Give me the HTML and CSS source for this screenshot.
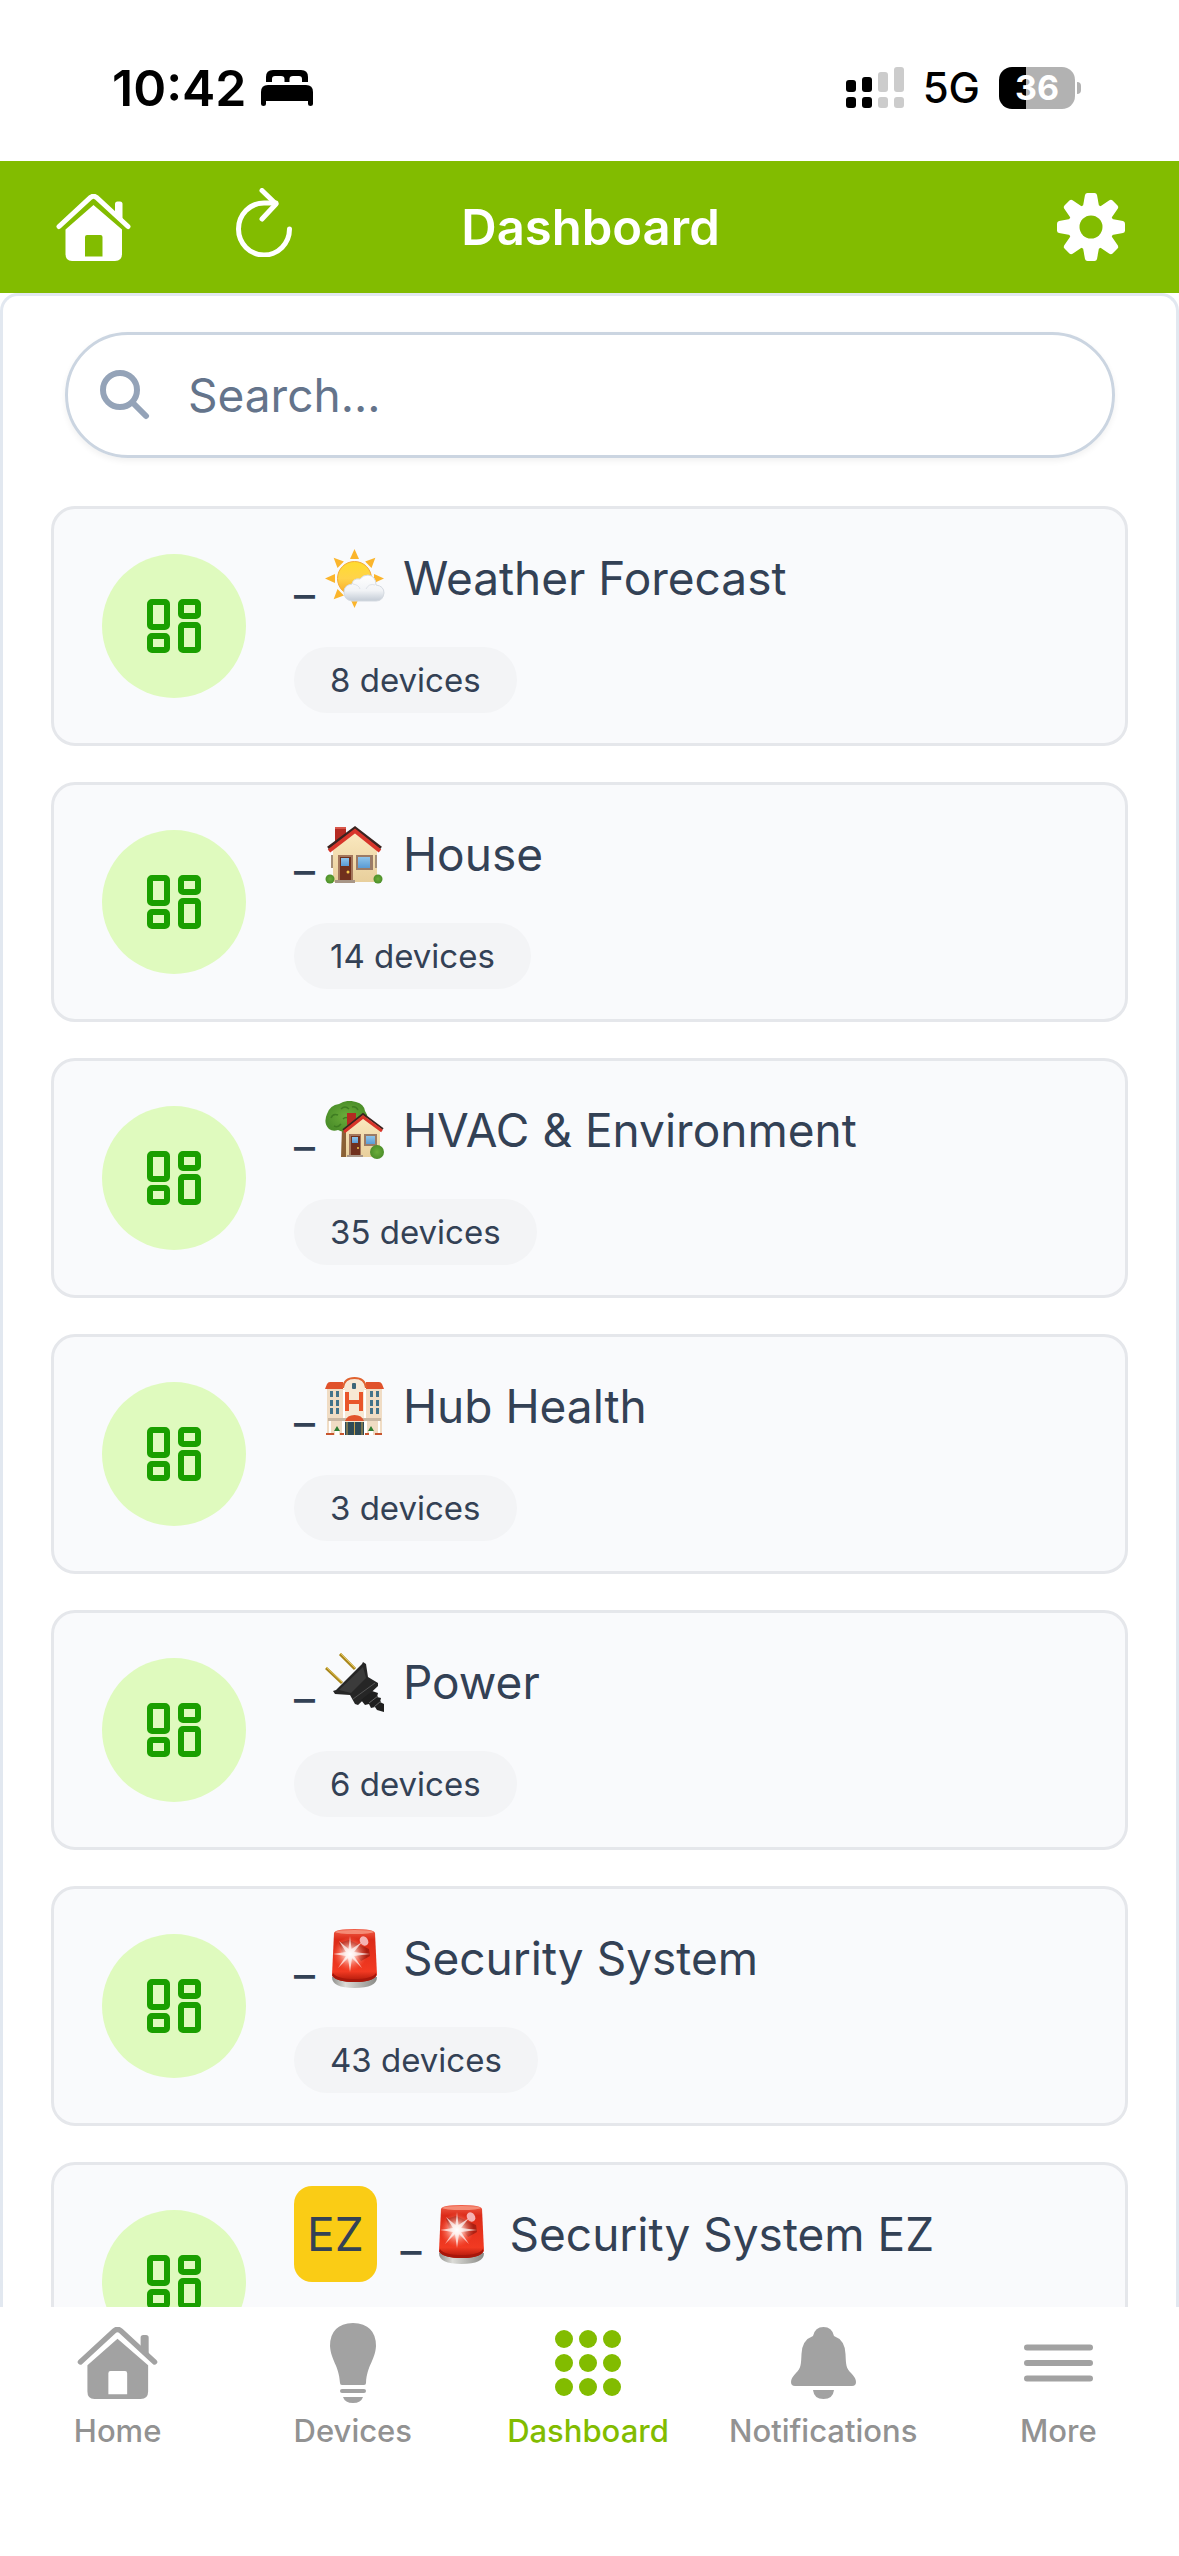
FILE: index.html
```html
<!DOCTYPE html>
<html lang="en">
<head>
  <meta charset="UTF-8">
  <meta name="viewport" content="width=device-width, initial-scale=1.0">
  <title>Dashboard</title>
  <link rel="stylesheet" href="styles.css">
</head>
<body>
  <!-- shared icons -->
  <svg class="sprite" aria-hidden="true">
    <defs>
      <linearGradient id="sun-fill" x1="0" y1="0" x2="0" y2="1">
        <stop offset="0" stop-color="#ffdc2e"/>
        <stop offset="0.5" stop-color="#ffd34a"/>
        <stop offset="1" stop-color="#f7a521"/>
      </linearGradient>
      <linearGradient id="cloud-fill" x1="0" y1="0" x2="0" y2="1">
        <stop offset="0" stop-color="#ffffff"/>
        <stop offset="0.6" stop-color="#f1f3f6"/>
        <stop offset="1" stop-color="#c3cbd5"/>
      </linearGradient>
      <linearGradient id="siren-fill" x1="0" y1="0" x2="0" y2="1">
        <stop offset="0" stop-color="#f0604a"/>
        <stop offset="0.2" stop-color="#dc2b18"/>
        <stop offset="0.8" stop-color="#f23a22"/>
        <stop offset="1" stop-color="#a81508"/>
      </linearGradient>
      <linearGradient id="siren-base" x1="0" y1="0" x2="1" y2="0">
        <stop offset="0" stop-color="#8f8f8c"/>
        <stop offset="0.3" stop-color="#dcdcd8"/>
        <stop offset="1" stop-color="#8a8a86"/>
      </linearGradient>
      <radialGradient id="siren-glow">
        <stop offset="0" stop-color="#ffffff"/>
        <stop offset="0.3" stop-color="#ffd5cc" stop-opacity="0.9"/>
        <stop offset="1" stop-color="#ff6a50" stop-opacity="0"/>
      </radialGradient>
      <linearGradient id="wall-fill" x1="0" y1="0" x2="0" y2="1">
        <stop offset="0" stop-color="#fbe9c0"/>
        <stop offset="1" stop-color="#e8cf9c"/>
      </linearGradient>
      <linearGradient id="glass-fill" x1="0" y1="0" x2="0" y2="1">
        <stop offset="0" stop-color="#8fc4ea"/>
        <stop offset="1" stop-color="#5a9bd4"/>
      </linearGradient>
      <radialGradient id="tree-fill">
        <stop offset="0" stop-color="#6bad3a"/>
        <stop offset="1" stop-color="#4c8f2a"/>
      </radialGradient>
    </defs>
    <symbol id="icon-home" viewBox="0 0 75 67">
      <path d="M3 32.500 34.500 3.500Q37.500 1 40.500 3.500L72 32.500" fill="none" stroke="currentColor" stroke-width="5" stroke-linecap="round"/>
      <path d="M59 10Q59 7.500 61.500 7.500H64Q66.500 7.500 66.500 10V27L59 20Z" fill="currentColor"/>
      <path fill-rule="evenodd" d="M37.500 11 66 35.500V60Q66 67 59 67H16Q9.500 67 9.500 60V35.500ZM31 41Q29 41 29 43V62.500H46.500V43Q46.500 41 44.500 41Z" fill="currentColor"/>
    </symbol>
    <symbol id="icon-grid" viewBox="0 0 54 54">
      <g fill="none" stroke="currentColor" stroke-width="6">
        <rect x="3" y="3" width="17" height="25" rx="2"/>
        <rect x="34" y="3" width="17" height="14" rx="2"/>
        <rect x="34" y="26" width="17" height="25" rx="2"/>
        <rect x="3" y="37" width="17" height="14" rx="2"/>
      </g>
    </symbol>
    <symbol id="emoji-siren" viewBox="0 0 60 60">
      <path d="M7 48Q7 59 29.500 59T52 48Z" fill="url(#siren-base)"/>
      <path d="M9 4Q10 0 29.500 0T50 4L52 46Q48 53 29.500 53T7 46Z" fill="url(#siren-fill)"/>
      <path d="M14 14 24 11 44 20 45 27 36 32 30 24 18 26Z" fill="#7d1009" opacity="0.55"/>
      <ellipse cx="29.500" cy="3" rx="19" ry="2" fill="#f79a84" opacity="0.8"/>
      <path d="M8 44Q12 50 29.500 50T51 44V47Q47 53 29.500 53T7 47Z" fill="#a8170b"/>
      <ellipse cx="39" cy="12" rx="4" ry="5" fill="#f5b3b3" transform="rotate(-35 39 12)"/>
      <circle cx="25" cy="25" r="17" fill="url(#siren-glow)"/>
      <path d="M25 7 26.500 20 37 13 29 23 45 25 29 27 37 39 27 29 25 43 23 29 13 39 21 27 8 25 21 23 14 12 23.500 20Z" fill="#fff" opacity="0.7"/>
    </symbol>
  </svg>

  <div class="status-bar">
    <div class="status-left">
      <span class="clock">10:42</span>
      <svg class="bed" viewBox="0 0 52 36" aria-hidden="true">
        <path d="M5 12V7Q5 0 12 0H40Q47 0 47 7V12H41V9Q41 6 38 6H32Q28.500 6 28.500 9V12H23.500V9Q23.500 6 20 6H14Q11 6 11 9V12Z"/>
        <path d="M0 22Q0 15 7 15H45Q52 15 52 22V34Q52 36 49.500 36T47 34V31H5V34Q5 36 2.500 36T0 34Z"/>
      </svg>
    </div>
    <div class="status-right">
      <svg class="signal" viewBox="0 0 58 42" aria-hidden="true">
        <g fill="#000">
          <rect x="0" y="13" width="10" height="12" rx="3"/>
          <rect x="16" y="10" width="10" height="15" rx="3"/>
          <rect x="0" y="30" width="10" height="11" rx="3"/>
          <rect x="16" y="30" width="10" height="11" rx="3"/>
        </g>
        <g fill="#ccc">
          <rect x="32" y="5" width="10" height="20" rx="3"/>
          <rect x="48" y="0" width="10" height="25" rx="3"/>
          <rect x="32" y="30" width="10" height="11" rx="3"/>
          <rect x="48" y="30" width="10" height="11" rx="3"/>
        </g>
      </svg>
      <span class="network">5G</span>
      <div class="battery">
        <span class="battery-level">36</span>
        <span class="battery-tip"></span>
      </div>
    </div>
  </div>

  <header class="app-header">
    <div class="header-actions">
      <button type="button" aria-label="Home">
        <svg class="header-home"><use href="#icon-home"/></svg>
      </button>
      <button type="button" aria-label="Refresh">
        <svg class="header-refresh" viewBox="0 0 56 69" fill="none" stroke="#fff" stroke-width="5" stroke-linecap="round" stroke-linejoin="round">
          <path d="M53.500 41A25.500 26 0 1 1 28 15H40"/>
          <path d="M26 2.500 40 16 26 31"/>
        </svg>
      </button>
    </div>
    <h1>Dashboard</h1>
    <button type="button" class="header-settings" aria-label="Settings">
      <svg viewBox="0 0 68 68">
        <g fill="#fff">
          <circle cx="34" cy="34" r="23"/>
          <path id="tooth" d="M28 2Q28.500 0 30.500 0H37.500Q39.500 0 40 2L42 13H26Z"/>
          <use href="#tooth" transform="rotate(45 34 34)"/>
          <use href="#tooth" transform="rotate(90 34 34)"/>
          <use href="#tooth" transform="rotate(135 34 34)"/>
          <use href="#tooth" transform="rotate(180 34 34)"/>
          <use href="#tooth" transform="rotate(225 34 34)"/>
          <use href="#tooth" transform="rotate(270 34 34)"/>
          <use href="#tooth" transform="rotate(315 34 34)"/>
        </g>
        <circle cx="34" cy="34" r="11.500" fill="#82bc00"/>
      </svg>
    </button>
  </header>

  <main class="panel">
    <label class="search">
      <svg viewBox="0 0 50 50" fill="none" stroke="#94a3b8" stroke-width="6" stroke-linecap="round" aria-hidden="true">
        <circle cx="20" cy="20" r="17"/>
        <path d="M33 33 46 46"/>
      </svg>
      <input type="search" placeholder="Search..." aria-label="Search dashboards">
    </label>

    <ul class="dashboards">
      <li>
        <a class="card" href="#weather">
          <span class="card-icon"><svg><use href="#icon-grid"/></svg></span>
          <span class="card-body">
            <span class="card-title">_<svg class="emoji" viewBox="0 0 60 60" role="img" aria-label="Sun behind cloud">
              <g fill="#fbb52c">
                <path id="ray" d="M29.500 0 34 10H25Z"/>
                <use href="#ray" transform="rotate(45 29.500 29.500)"/>
                <use href="#ray" transform="rotate(90 29.500 29.500)"/>
                <use href="#ray" transform="rotate(180 29.500 29.500)"/>
                <use href="#ray" transform="rotate(225 29.500 29.500)"/>
                <use href="#ray" transform="rotate(270 29.500 29.500)"/>
                <use href="#ray" transform="rotate(315 29.500 29.500)"/>
              </g>
              <circle cx="29.500" cy="29.500" r="17" fill="url(#sun-fill)" stroke="#f3a93a" stroke-width="1"/>
              <path d="M27 52Q19 51 19 43 19 36 27 35 28 29 35 30 38 26 43 26 51 27 51 36 59 37 59 44 58 52 51 52Z" fill="url(#cloud-fill)" stroke="#d5dae1" stroke-width="1"/>
              <path d="M28 35Q34 36 35 40M41 40Q44 34 50 36" fill="none" stroke="#dfe3e9" stroke-width="1"/>
            </svg> Weather Forecast</span>
            <span class="chip">8 devices</span>
          </span>
        </a>
      </li>
      <li>
        <a class="card" href="#house">
          <span class="card-icon"><svg><use href="#icon-grid"/></svg></span>
          <span class="card-body">
            <span class="card-title">_<svg class="emoji" viewBox="0 0 60 60" role="img" aria-label="House">
              <rect x="10" y="2" width="11" height="18" fill="#b52a22"/>
              <rect x="10" y="2" width="11" height="2" fill="#d8574b"/>
              <path d="M8 25 30 6 52 25V57H8Z" fill="url(#wall-fill)"/>
              <path d="M3 23 30 3 56 23" fill="none" stroke="#3a2320" stroke-width="3"/>
              <path d="M4 26 30 6 55 26" fill="none" stroke="#d8352a" stroke-width="4"/>
              <path d="M7 30V43M51 30V43" stroke="#a58f78" stroke-width="2"/>
              <rect x="13" y="30" width="15" height="26" fill="#a3765c"/>
              <rect x="15" y="32" width="11" height="24" fill="#70301d"/>
              <rect x="16" y="33" width="8" height="8" fill="url(#glass-fill)"/>
              <circle cx="23" cy="47" r="1.500" fill="#f5c84c"/>
              <rect x="31" y="30" width="17" height="15" fill="#9b7b66"/>
              <rect x="33" y="32" width="12" height="11" fill="url(#glass-fill)"/>
              <circle cx="5" cy="54" r="4.500" fill="url(#tree-fill)"/>
              <circle cx="53" cy="54" r="4.500" fill="url(#tree-fill)"/>
              <rect x="10" y="55" width="20" height="3" fill="#a89687"/>
            </svg> House</span>
            <span class="chip">14 devices</span>
          </span>
        </a>
      </li>
      <li>
        <a class="card" href="#hvac">
          <span class="card-icon"><svg><use href="#icon-grid"/></svg></span>
          <span class="card-body">
            <span class="card-title">_<svg class="emoji" viewBox="0 0 60 60" role="img" aria-label="House with garden">
              <path d="M17 26H23V56H16Z" fill="#8a6035"/>
              <path d="M4 28Q-2 22 2 13 5 4 14 3 22-2 31 1 39 3 40 10 45 17 40 24 34 30 26 28 20 33 13 29 8 31 4 28Z" fill="url(#tree-fill)"/>
              <path d="M6 17Q8 12 13 14M16 8Q20 4 24 8M27 6Q31 5 33 9M9 25Q13 27 16 23M18 18Q21 15 24 18" fill="none" stroke="#3f7d22" stroke-width="1.500"/>
              <rect x="22" y="12" width="9" height="12" fill="#b52a22"/>
              <path d="M21 30 38 16 55 30V56H21Z" fill="url(#wall-fill)"/>
              <path d="M18 29 38 13 58 28" fill="none" stroke="#3a2320" stroke-width="2"/>
              <path d="M19 31 38 16 57 30" fill="none" stroke="#d8352a" stroke-width="3"/>
              <rect x="24" y="33" width="12" height="22" fill="#a3765c"/>
              <rect x="26" y="35" width="9" height="20" fill="#70301d"/>
              <rect x="27" y="36" width="6" height="6" fill="url(#glass-fill)"/>
              <circle cx="33" cy="47" r="1" fill="#f5c84c"/>
              <rect x="39" y="33" width="13" height="12" fill="#9b7b66"/>
              <rect x="41" y="35" width="9" height="8" fill="url(#glass-fill)"/>
              <circle cx="52" cy="51" r="7" fill="url(#tree-fill)"/>
              <rect x="22" y="54" width="16" height="2" fill="#a89687"/>
            </svg> HVAC &amp; Environment</span>
            <span class="chip">35 devices</span>
          </span>
        </a>
      </li>
      <li>
        <a class="card" href="#hub">
          <span class="card-icon"><svg><use href="#icon-grid"/></svg></span>
          <span class="card-body">
            <span class="card-title">_<svg class="emoji" viewBox="0 0 60 60" role="img" aria-label="Hotel">
              <path d="M2 12H57V58H2Z" fill="#f0dcc4"/>
              <path d="M19 58V12Q20 2 29.500 2T40 12V58Z" fill="#f7e8d4"/>
              <path d="M19 13V58M40 13V58" stroke="#fff" stroke-width="2"/>
              <path d="M2 7Q3 5 5 5H18V12H0ZM41 5H54Q56 5 57 7L59 12H41Z" fill="#e0522c"/>
              <path d="M18 11Q19 1 29.500 1T41 11" fill="none" stroke="#e0622f" stroke-width="2"/>
              <rect x="27" y="6" width="4" height="6" rx="1" fill="#3d6679"/>
              <path d="M22 15V34M36 15V34M22 25H36" stroke="#e9562b" stroke-width="4"/>
              <g fill="#42728a">
                <rect x="5" y="14" width="3" height="6"/><rect x="11" y="14" width="3" height="6"/>
                <rect x="5" y="23" width="3" height="6"/><rect x="11" y="23" width="3" height="6"/>
                <rect x="5" y="31" width="3" height="6"/><rect x="11" y="31" width="3" height="6"/>
                <rect x="45" y="14" width="3" height="6"/><rect x="51" y="14" width="3" height="6"/>
                <rect x="45" y="23" width="3" height="6"/><rect x="51" y="23" width="3" height="6"/>
                <rect x="45" y="31" width="3" height="6"/><rect x="51" y="31" width="3" height="6"/>
              </g>
              <rect x="3" y="41" width="53" height="3" fill="#c9b7a3"/>
              <path d="M5 44V57M18 44V57M41 44V57M54 44V57" stroke="#fff" stroke-width="2"/>
              <path d="M20 44Q22 38 29.500 38T39 44Z" fill="#e2532c"/>
              <rect x="20" y="45" width="19" height="13" fill="#2f4a56"/>
              <path d="M22 45V58M29.500 45V58M37 45V58" stroke="#c8a24d" stroke-width="1"/>
              <path d="M12 49 15 54H9ZM46 49 49 54H43Z" fill="#2e7d32"/>
              <path d="M10 54H14V58H10ZM44 54H48V58H44Z" fill="#fff"/>
              <path d="M1 57H9M15 57H19M40 57H44M50 57H57" stroke="#c8552f" stroke-width="2"/>
            </svg> Hub Health</span>
            <span class="chip">3 devices</span>
          </span>
        </a>
      </li>
      <li>
        <a class="card" href="#power">
          <span class="card-icon"><svg><use href="#icon-grid"/></svg></span>
          <span class="card-body">
            <span class="card-title">_<svg class="emoji" viewBox="0 0 60 60" role="img" aria-label="Electric plug">
              <path d="M1 15 17 30M15 1 30 16" stroke="#a8861c" stroke-width="3"/>
              <path d="M1 14 17 29M15 0 30 15" stroke="#e4c65a" stroke-width="1"/>
              <path d="M8 38 11 37 37 11 38 9 41 11 43 24 53 30V33L33 52 30 51 25 42 10 41Z" fill="#262626"/>
              <path d="M14 37 38 14 41 25 26 40Z" fill="#3b3b3b"/>
              <path d="M28 46 50 30" stroke="#555" stroke-width="1"/>
              <path d="M36 47 47 38 53 40 52 44 56 45 55 49 59 51V59L52 57 50 54 46 55 44 51 40 52Z" fill="#1f1f1f"/>
              <path d="M44 50 53 43M49 54 56 48" stroke="#666" stroke-width="1"/>
            </svg> Power</span>
            <span class="chip">6 devices</span>
          </span>
        </a>
      </li>
      <li>
        <a class="card" href="#security">
          <span class="card-icon"><svg><use href="#icon-grid"/></svg></span>
          <span class="card-body">
            <span class="card-title">_<svg class="emoji" role="img" aria-label="Siren"><use href="#emoji-siren"/></svg> Security System</span>
            <span class="chip">43 devices</span>
          </span>
        </a>
      </li>
      <li>
        <a class="card" href="#security-ez">
          <span class="card-icon"><svg><use href="#icon-grid"/></svg></span>
          <span class="card-body">
            <span class="card-title"><span class="ez-badge">EZ</span>_<svg class="emoji" role="img" aria-label="Siren"><use href="#emoji-siren"/></svg> Security System EZ</span>
          </span>
        </a>
      </li>
    </ul>
  </main>

  <nav class="tab-bar">
    <a href="#home">
      <svg class="tab-home"><use href="#icon-home"/></svg>
      <span>Home</span>
    </a>
    <a href="#devices">
      <svg class="tab-bulb" viewBox="0 0 46 80" fill="currentColor">
        <path d="M23 0Q46 1 46 23C45 38 37 42 36 60Q36 62 34 62H12Q10 62 10 60C9 42 1 38 0 23Q0 1 23 0Z"/>
        <rect x="10" y="66" width="26" height="4" rx="2"/>
        <path d="M13 74H33Q31 80 23 80T13 74Z"/>
      </svg>
      <span>Devices</span>
    </a>
    <a href="#dashboard" class="active" aria-current="page">
      <svg class="tab-dots" viewBox="0 0 66 66" fill="currentColor">
        <circle cx="9" cy="9" r="9"/><circle cx="33" cy="9" r="9"/><circle cx="57" cy="9" r="9"/>
        <circle cx="9" cy="33" r="9"/><circle cx="33" cy="33" r="9"/><circle cx="57" cy="33" r="9"/>
        <circle cx="9" cy="57" r="9"/><circle cx="33" cy="57" r="9"/><circle cx="57" cy="57" r="9"/>
      </svg>
      <span>Dashboard</span>
    </a>
    <a href="#notifications">
      <svg class="tab-bell" viewBox="0 0 65 72" fill="currentColor">
        <path d="M22 9Q24 0 32.500 0T43 9Q54 13 54.500 27C55 38 55 41 60 46Q65 51 65 55 65 59 61 59H4Q0 59 0 55 0 51 5 46C10 41 10 38 10.500 27Q11 13 22 9Z"/>
        <path d="M22 63H43Q42 72 32.500 72T22 63Z"/>
      </svg>
      <span>Notifications</span>
    </a>
    <a href="#more">
      <svg class="tab-more" viewBox="0 0 69 38" stroke="currentColor" stroke-width="6" stroke-linecap="round">
        <path d="M3 3.500H66M3 19H66M3 34.500H66"/>
      </svg>
      <span>More</span>
    </a>
  </nav>
</body>
</html>
```
FILE: styles.css
```css
* {
  box-sizing: border-box;
}
body {
  margin: 0;
  height: 100vh;
  display: flex;
  flex-direction: column;
  background-color: #fff;
  color: #334155;
  font-family: Inter, "Liberation Sans", sans-serif;
}
button {
  display: flex;
  padding: 0;
  border: none;
  background: none;
  color: #fff;
  cursor: pointer;
}
a {
  color: inherit;
  text-decoration: none;
}
svg {
  flex: none;
}
.sprite {
  position: absolute;
  width: 0;
  height: 0;
}

/* status bar */
.status-bar {
  flex: none;
  height: 161px;
  padding: 14px 98px 0 112px;
  display: flex;
  align-items: center;
  justify-content: space-between;
  color: #000;
}
.status-left,
.status-right {
  display: flex;
  align-items: center;
}
.status-left {
  gap: 14px;
}
.status-right {
  gap: 19px;
}
.clock {
  font-size: 50px;
  font-weight: 600;
}
.bed {
  width: 52px;
  height: 36px;
}
.signal {
  width: 58px;
  height: 42px;
}
.network {
  font-size: 42px;
  font-weight: 500;
}
.battery {
  display: flex;
  align-items: center;
  gap: 2px;
}
.battery-level {
  width: 76px;
  height: 42px;
  border-radius: 13px;
  background: linear-gradient(to right, #000 36%, #b2b2b2 36%);
  color: #fff;
  font-size: 34px;
  font-weight: 700;
  line-height: 42px;
  text-align: center;
}
.battery-tip {
  width: 4px;
  height: 12px;
  border-radius: 0 4px 4px 0;
  background-color: #b2b2b2;
}

/* header */
.app-header {
  flex: none;
  height: 132px;
  padding: 0 54px 0 56px;
  display: grid;
  grid-template-columns: 1fr auto 1fr;
  align-items: center;
  background-color: #82bc00;
  color: #fff;
}
.app-header h1 {
  margin: 0;
  font-size: 49px;
  font-weight: 600;
}
.header-actions {
  display: flex;
  align-items: center;
  gap: 105px;
}
.header-home {
  width: 75px;
  height: 67px;
}
.header-refresh {
  width: 56px;
  height: 69px;
  margin-bottom: 10px;
}
.header-settings {
  justify-self: end;
}
.header-settings svg {
  width: 68px;
  height: 68px;
}

/* dashboard list */
.panel {
  flex: 1;
  min-height: 0;
  overflow: hidden;
  padding: 36px 48px 0;
  border: 3px solid #e2e8f0;
  border-bottom: none;
  border-radius: 18px 18px 0 0;
}
.search {
  display: flex;
  align-items: center;
  gap: 38px;
  height: 126px;
  margin: 0 13px 48px 14px;
  padding: 0 32px;
  border: 3px solid #cbd5e1;
  border-radius: 63px;
  box-shadow: 0 3px 6px rgba(0, 0, 0, 0.06);
}
.search svg {
  width: 50px;
  height: 50px;
}
.search input {
  flex: 1;
  min-width: 0;
  padding: 0;
  border: none;
  outline: none;
  background: none;
  color: #334155;
  font-family: inherit;
  font-size: 46px;
}
.search input::placeholder {
  color: #64748b;
}
.dashboards {
  display: flex;
  flex-direction: column;
  gap: 36px;
  margin: 0;
  padding: 0;
  list-style: none;
}
.card {
  display: flex;
  align-items: center;
  gap: 48px;
  min-height: 240px;
  padding: 0 48px;
  border: 3px solid #e5e7eb;
  border-radius: 24px;
  background-color: #f9fafc;
}
.card-icon {
  flex: none;
  display: flex;
  align-items: center;
  justify-content: center;
  width: 144px;
  height: 144px;
  border-radius: 50%;
  background-color: #dffabe;
  color: #1a9f00;
}
.card-icon svg {
  width: 54px;
  height: 54px;
}
.card-body {
  display: flex;
  flex-direction: column;
  align-items: flex-start;
  gap: 33px;
  min-height: 174px;
  padding-top: 3px;
}
.card-title {
  height: 72px;
  font-size: 46px;
  line-height: 72px;
  white-space: nowrap;
}
.emoji {
  width: 60px;
  height: 60px;
  margin: 0 5px 0 10px;
  vertical-align: -14px;
}
.ez-badge {
  display: inline-block;
  margin: -12px 24px -12px 0;
  padding: 12px 13px;
  border-radius: 18px;
  background-color: #facc15;
}
.chip {
  padding: 0 36px;
  border-radius: 33px;
  background-color: #f3f4f6;
  font-size: 33px;
  line-height: 66px;
}

/* tab bar */
.tab-bar {
  flex: none;
  height: 249px;
  padding-right: 3px;
  display: grid;
  grid-template-columns: repeat(5, 1fr);
  background-color: #fff;
  color: #a2a2a2;
}
.tab-bar a {
  display: grid;
  grid-template-rows: 112px 24px;
  align-content: start;
  align-items: center;
  justify-items: center;
}
.tab-bar span {
  color: #929292;
  font-size: 31px;
  font-weight: 500;
  line-height: 24px;
}
.tab-bar .active,
.tab-bar .active span {
  color: #82bc00;
}
.tab-home {
  width: 81px;
  height: 72px;
}
.tab-bulb {
  width: 46px;
  height: 80px;
}
.tab-dots {
  width: 66px;
  height: 66px;
}
.tab-bell {
  width: 65px;
  height: 72px;
}
.tab-more {
  width: 69px;
  height: 38px;
}
```
